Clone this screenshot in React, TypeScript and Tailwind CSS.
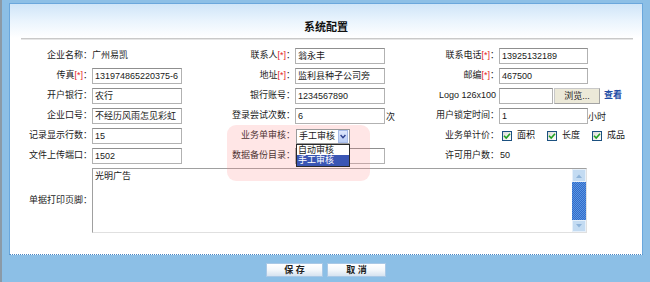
import React from "react";

const Star = () => <span className="text-[#e5262a]">[*]</span>;

const L1 = ({ children }: { children: React.ReactNode }) => (
  <div className="w-[82px] shrink-0 text-right whitespace-nowrap">{children}</div>
);
const L3 = ({ children }: { children: React.ReactNode }) => (
  <div className="w-[83px] shrink-0 text-right whitespace-nowrap">{children}</div>
);
const F1 = ({ children }: { children?: React.ReactNode }) => (
  <div className="w-[121px] shrink-0 flex items-center">{children}</div>
);

const Box = ({ v, w = "w-[90px]" }: { v?: string; w?: string }) => (
  <div
    className={`${w} h-[16px] border border-[#b2b2b2] border-t-[#8f8f8f] bg-white px-[2px] leading-[14px] whitespace-nowrap overflow-hidden`}
  >
    {v}
  </div>
);

const Check = ({ label }: { label: string }) => (
  <div className="flex items-center">
    <div className="w-[10px] h-[10px] border border-[#1c5180] bg-gradient-to-br from-[#dcdcd6] to-white flex items-center justify-center">
      <svg width="8" height="8" viewBox="0 0 8 8">
        <path d="M1 3.8 L3.2 6 L7 1.8" stroke="#21a121" strokeWidth="1.6" fill="none" />
      </svg>
    </div>
    <span className="ml-[5px]">{label}</span>
  </div>
);

export default function App() {
  return (
    <div className="w-[650px] h-[282px] bg-[#8cbfe6] flex overflow-hidden font-['Liberation_Sans','Noto_Sans_CJK_SC',sans-serif] text-[9px] text-[#1a1a1a]">
      <div className="w-[2px] shrink-0 bg-[#8b9aa7]" />
      <div className="flex-1 flex flex-col pl-[7px] pr-[7px] pt-[3px]">
        <div className="relative h-[252px] bg-white border border-[#6aa7dc] border-b-[#4c86c2] [border-bottom-style:dotted] flex flex-col">
          {/* header */}
          <div className="h-[34px] bg-gradient-to-b from-[#cfe5f8] via-[#eaf4fd] to-white text-center pt-[16px]">
            <span className="text-[11px] leading-[14px] font-bold text-[#111]">系统配置</span>
          </div>
          <div className="ml-[11px] mr-[9px] h-[2px] border-t border-[#c9c9c9] border-b border-b-[#e6e6e6]" />

          <div className="mt-[6px] flex flex-col">
            {/* row 1 */}
            <div className="h-[20px] flex items-center">
              <L1>企业名称：</L1>
              <F1>广州易凯</F1>
              <L1>联系人<Star />：</L1>
              <F1><Box v="翁永丰" /></F1>
              <L3>联系电话<Star />：</L3>
              <div className="flex items-center"><Box v="13925132189" w="w-[89px]" /></div>
            </div>
            {/* row 2 */}
            <div className="h-[20px] flex items-center">
              <L1>传真<Star />：</L1>
              <F1><Box v="131974865220375-6" /></F1>
              <L1>地址<Star />：</L1>
              <F1><Box v="监利县种子公司旁" /></F1>
              <L3>邮编<Star />：</L3>
              <div className="flex items-center"><Box v="467500" w="w-[89px]" /></div>
            </div>
            {/* row 3 */}
            <div className="h-[20px] flex items-center">
              <L1>开户银行：</L1>
              <F1><Box v="农行" /></F1>
              <L1>银行账号：</L1>
              <F1><Box v="1234567890" /></F1>
              <div className="w-[83px] shrink-0 text-right whitespace-nowrap pr-[3px]">Logo 126x100</div>
              <div className="flex items-center">
                <Box w="w-[54px]" />
                <div className="ml-[1px] w-[46px] h-[16px] bg-[#ece9d8] border border-[#a3a3a3] border-t-[#c8c8c8] border-l-[#c8c8c8] text-center leading-[14px] text-[#222]">
                  浏览...
                </div>
                <span className="ml-[4px] text-[#1f4ea6] font-bold">查看</span>
              </div>
            </div>
            {/* row 4 */}
            <div className="h-[20px] flex items-center">
              <L1>企业口号：</L1>
              <F1><Box v="不经历风雨怎见彩虹" /></F1>
              <L1>登录尝试次数：</L1>
              <F1><Box v="6" /><span className="ml-[1px] mt-[4px]">次</span></F1>
              <L3>用户锁定时间：</L3>
              <div className="flex items-center"><Box v="1" w="w-[89px]" /><span className="mt-[4px]">小时</span></div>
            </div>
            {/* row 5 */}
            <div className="h-[20px] flex items-center">
              <L1>记录显示行数：</L1>
              <F1><Box v="15" /></F1>
              <L1>业务单审核：</L1>
              <F1>
                <div className="relative z-20 ml-[1px]">
                  <div className="w-[54px] h-[15px] border border-[#9a9a9a] bg-white flex items-center">
                    <span className="flex-1 pl-[2px] leading-[13px]">手工审核</span>
                    <div className="w-[10px] h-[13px] mr-[1px] bg-gradient-to-b from-[#dfe8fb] to-[#b9cdf5] border border-[#a6bbe8] flex items-center justify-center">
                      <svg width="6" height="5" viewBox="0 0 6 5">
                        <path d="M0.6 1 L3 3.6 L5.4 1" stroke="#2c3f8c" strokeWidth="1.4" fill="none" />
                      </svg>
                    </div>
                  </div>
                  <div className="absolute left-0 top-[15px] w-[54px] border border-[#2a2a2a] bg-white">
                    <div className="h-[10px] leading-[10px] pl-[1px]">自动审核</div>
                    <div className="h-[11px] leading-[11px] pl-[1px] bg-[#3a56b4] text-white">手工审核</div>
                  </div>
                </div>
              </F1>
              <L3>业务单计价：</L3>
              <div className="flex items-center gap-[12px] ml-[3px]">
                <Check label="面积" />
                <Check label="长度" />
                <Check label="成品" />
              </div>
            </div>
            {/* row 6 */}
            <div className="h-[20px] flex items-center">
              <L1>文件上传端口：</L1>
              <F1><Box v="1502" /></F1>
              <L1>数据备份目录：</L1>
              <F1><Box /></F1>
              <L3>许可用户数：</L3>
              <div className="ml-[1px]">50</div>
            </div>
            {/* textarea row */}
            <div className="mt-[2px] flex items-center">
              <L1>单据打印页脚：</L1>
              <div className="w-[495px] h-[65px] border border-[#a0a0a0] border-b-[#e0e0e0] border-r-[#e0e0e0] bg-white flex">
                <div className="flex-1 px-[2px] pt-[1px] leading-[12px]">光明广告</div>
                <div className="w-[14px] flex flex-col bg-[#cfe0f2]">
                  <div className="h-[13px] bg-[#c3dbf2] border border-[#e6f0fa] flex items-center justify-center">
                    <svg width="6" height="4" viewBox="0 0 6 4"><path d="M0 4 L3 0.5 L6 4 Z" fill="#8fb4d9" /></svg>
                  </div>
                  <div className="flex-1 bg-[repeating-conic-gradient(#2f6ccc_0%_25%,#5d95df_0%_50%)] bg-[length:2px_2px]" />
                  <div className="h-[12px] bg-[#c3dbf2] border border-[#e6f0fa] flex items-center justify-center">
                    <svg width="6" height="4" viewBox="0 0 6 4"><path d="M0 0 L3 3.5 L6 0 Z" fill="#8fb4d9" /></svg>
                  </div>
                </div>
              </div>
            </div>
          </div>

          {/* pink highlight */}
          <div className="absolute left-[217px] top-[121px] w-[143px] h-[56px] rounded-[9px] bg-[rgba(255,128,128,0.2)] pointer-events-none z-10" />
        </div>

        <div className="mt-[8px] flex justify-center gap-[4px]">
          <div className="w-[57px] h-[14px] border border-[#a9c8e6] bg-gradient-to-b from-white via-[#f3f7fb] to-[#d6e3f0] text-center leading-[12px] font-bold text-[#222]">保 存</div>
          <div className="w-[59px] h-[14px] border border-[#a9c8e6] bg-gradient-to-b from-white via-[#f3f7fb] to-[#d6e3f0] text-center leading-[12px] font-bold text-[#222]">取 消</div>
        </div>
      </div>
    </div>
  );
}
